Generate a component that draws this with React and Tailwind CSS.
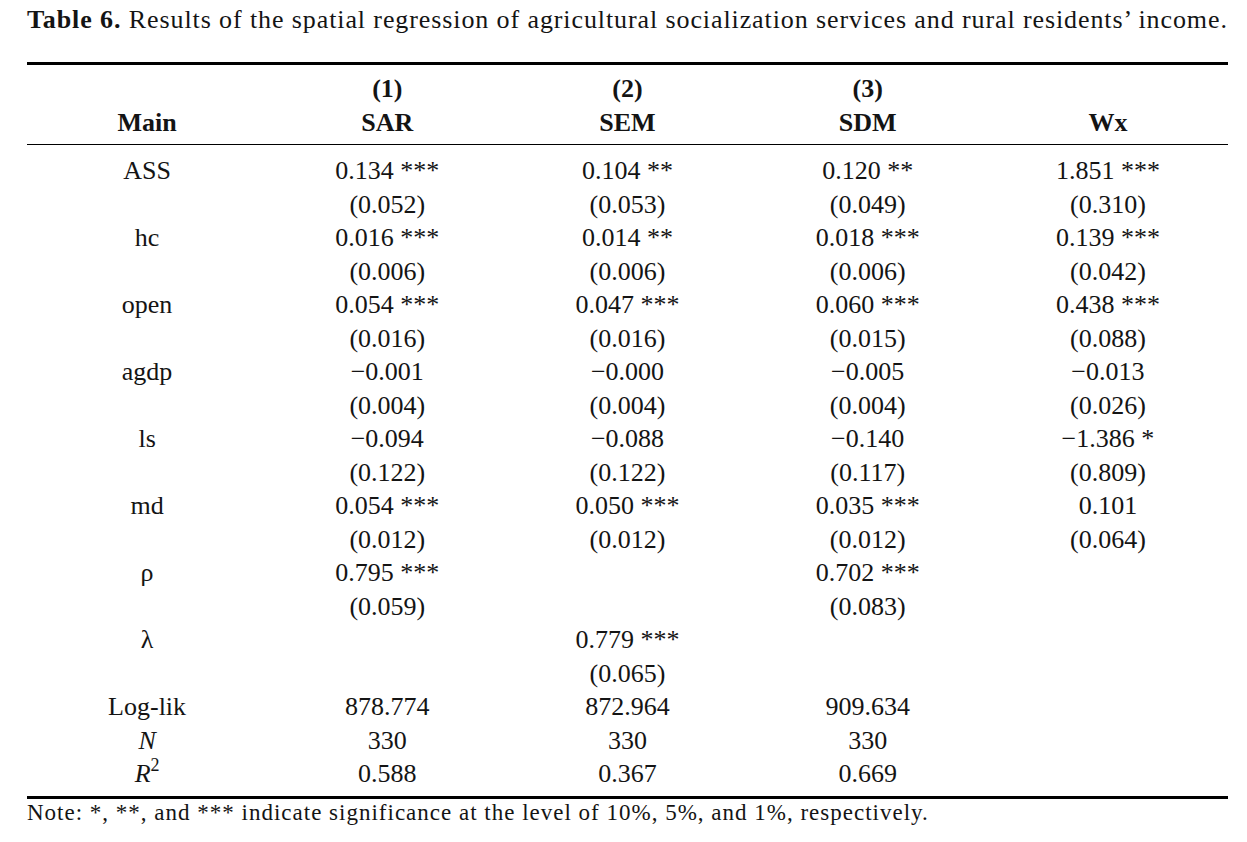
const rows = [
  ["ASS", "0.134 ***", "0.104 **", "0.120 **", "1.851 ***"],
  ["", "(0.052)", "(0.053)", "(0.049)", "(0.310)"],
  ["hc", "0.016 ***", "0.014 **", "0.018 ***", "0.139 ***"],
  ["", "(0.006)", "(0.006)", "(0.006)", "(0.042)"],
  ["open", "0.054 ***", "0.047 ***", "0.060 ***", "0.438 ***"],
  ["", "(0.016)", "(0.016)", "(0.015)", "(0.088)"],
  ["agdp", "−0.001", "−0.000", "−0.005", "−0.013"],
  ["", "(0.004)", "(0.004)", "(0.004)", "(0.026)"],
  ["ls", "−0.094", "−0.088", "−0.140", "−1.386 *"],
  ["", "(0.122)", "(0.122)", "(0.117)", "(0.809)"],
  ["md", "0.054 ***", "0.050 ***", "0.035 ***", "0.101"],
  ["", "(0.012)", "(0.012)", "(0.012)", "(0.064)"],
  ["ρ", "0.795 ***", "", "0.702 ***", ""],
  ["", "(0.059)", "", "(0.083)", ""],
  ["λ", "", "0.779 ***", "", ""],
  ["", "", "(0.065)", "", ""],
  ["Log-lik", "878.774", "872.964", "909.634", ""],
  ["N", "330", "330", "330", ""],
  ["R2", "0.588", "0.367", "0.669", ""],
];

const Label = ({ text }) => {
  if (text === "N") return <span className="italic">N</span>;
  if (text === "R2")
    return (
      <span className="italic">
        R<sup className="not-italic text-[18px] relative -top-[11px]">2</sup>
      </span>
    );
  return text;
};

const App = () => {
  return (
    <div className="min-h-[842px] w-[1247px] bg-white px-[27px] pt-[5px] font-['Liberation_Serif',serif] text-[#141414]">
      <p className="text-[26px] leading-[30px] tracking-[0.9px] whitespace-nowrap">
        <span className="font-bold">Table 6.</span> Results of the spatial regression of agricultural
        socialization services and rural residents’ income.
      </p>

      <div className="mt-[27px] w-[1201px] border-t-[3px] border-b-[3px] border-black">
        {/* header */}
        <div className="border-b border-black pt-[4px] pb-[7px] text-[26px] font-bold">
          <div className="grid grid-cols-5 h-[34px] items-center text-center">
            <div />
            <div>(1)</div>
            <div>(2)</div>
            <div>(3)</div>
            <div />
          </div>
          <div className="grid grid-cols-5 h-[34px] items-center text-center">
            <div>Main</div>
            <div>SAR</div>
            <div>SEM</div>
            <div>SDM</div>
            <div>Wx</div>
          </div>
        </div>

        {/* body */}
        <div className="pt-[6px] pb-[8px] text-[26px]">
          {rows.map((r, i) => (
            <div key={i} className="grid grid-cols-5 h-[33.5px] items-center text-center">
              <div>
                <Label text={r[0]} />
              </div>
              <div>{r[1]}</div>
              <div>{r[2]}</div>
              <div>{r[3]}</div>
              <div>{r[4]}</div>
            </div>
          ))}
        </div>
      </div>

      <p className="text-[23px] leading-[28px] tracking-[1px] whitespace-nowrap">
        Note: *, **, and *** indicate significance at the level of 10%, 5%, and 1%, respectively.
      </p>
    </div>
  );
};

export default App;
